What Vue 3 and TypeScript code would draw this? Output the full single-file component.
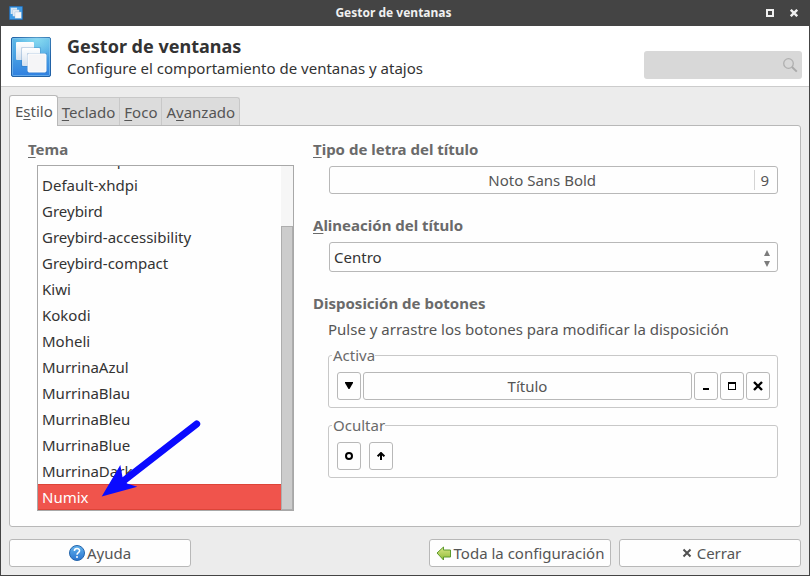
<script setup lang="ts">
import { ref } from 'vue'

interface TabItem {
  id: string
  before: string
  key: string
  after: string
}

const tabs: TabItem[] = [
  { id: 'style', before: 'E', key: 's', after: 'tilo' },
  { id: 'keyboard', before: '', key: 'T', after: 'eclado' },
  { id: 'focus', before: '', key: 'F', after: 'oco' },
  { id: 'advanced', before: 'A', key: 'v', after: 'anzado' },
]

const themes: string[] = [
  'Default-hdpi',
  'Default-xhdpi',
  'Greybird',
  'Greybird-accessibility',
  'Greybird-compact',
  'Kiwi',
  'Kokodi',
  'Moheli',
  'MurrinaAzul',
  'MurrinaBlau',
  'MurrinaBleu',
  'MurrinaBlue',
  'MurrinaDark',
  'Numix',
]

const activeTab = ref('style')
const theme = ref('Numix')
const alignment = ref('Centro')
const query = ref('')
</script>

<template>
  <div class="window">
    <header class="titlebar">
      <svg class="app-icon" viewBox="0 0 40 40" aria-hidden="true">
        <rect x="1" y="1" width="38" height="38" rx="2" fill="#3f9be6" stroke="#1f62a8" stroke-width="2" />
        <rect x="5" y="5" width="18" height="18" fill="#d7e6f4" />
        <rect x="11" y="11" width="18" height="18" fill="#e6edf5" stroke="#8db4d8" />
        <rect x="17" y="17" width="18" height="18" fill="#f6f6f8" stroke="#7fa8cf" />
      </svg>
      <span class="window-title">Gestor de ventanas</span>
      <div class="window-controls">
        <button type="button" aria-label="Maximizar">
          <svg width="8" height="8" viewBox="0 0 8 8"><path d="M1 1h6v6H1z" fill="none" stroke="#f0f0f0" stroke-width="2" /></svg>
        </button>
        <button type="button" aria-label="Cerrar ventana">
          <svg width="8" height="8" viewBox="0 0 8 8"><path d="M.8.8l6.4 6.4M7.2.8L.8 7.2" stroke="#f0f0f0" stroke-width="2.4" /></svg>
        </button>
      </div>
    </header>

    <section class="heading">
      <svg class="heading-icon" viewBox="0 0 40 40" aria-hidden="true">
        <defs>
          <linearGradient id="tile" x1="0" y1="0" x2="0" y2="1">
            <stop offset="0" stop-color="#5cb8e6" />
            <stop offset=".5" stop-color="#479fe3" />
            <stop offset="1" stop-color="#2f7fe0" />
          </linearGradient>
          <radialGradient id="glow" cx=".65" cy="0" r=".6">
            <stop offset="0" stop-color="#8fe0f2" stop-opacity=".9" />
            <stop offset="1" stop-color="#8fe0f2" stop-opacity="0" />
          </radialGradient>
          <linearGradient id="sheet" x1="0" y1="0" x2="0" y2="1">
            <stop offset="0" stop-color="#ffffff" />
            <stop offset="1" stop-color="#d3e0ee" />
          </linearGradient>
        </defs>
        <rect x=".5" y=".5" width="39" height="39" rx="1.5" fill="url(#tile)" stroke="#2262a6" />
        <rect x=".5" y=".5" width="39" height="39" rx="1.5" fill="url(#glow)" />
        <rect x="1.5" y="1.5" width="37" height="37" rx="1" fill="none" stroke="#8ecbf2" stroke-opacity=".55" />
        <rect x="5" y="5" width="18" height="18" rx="1" fill="url(#sheet)" />
        <rect x="10" y="10" width="20" height="20" rx="1" fill="#1d5fa8" opacity=".22" />
        <rect x="11" y="11" width="18" height="18" rx="1" fill="url(#sheet)" />
        <rect x="16" y="16" width="20" height="20" rx="1" fill="#1d5fa8" opacity=".3" />
        <rect x="17" y="17" width="18" height="18" rx="1" fill="#f5f5f7" stroke="#ffffff" />
      </svg>
      <div class="heading-text">
        <h1>Gestor de ventanas</h1>
        <p>Configure el comportamiento de ventanas y atajos</p>
      </div>
      <label class="search">
        <input v-model="query" type="text" aria-label="Buscar" />
        <svg width="16" height="16" viewBox="0 0 16 16" aria-hidden="true">
          <circle cx="6.500" cy="6.500" r="4.800" fill="none" stroke="#b0b0b0" stroke-width="1.300" />
          <path d="M10 10l4.800 4.600" stroke="#aaaaaa" stroke-width="2" />
        </svg>
      </label>
    </section>

    <main class="body">
      <div class="tabs" role="tablist">
        <button
          v-for="tab in tabs"
          :key="tab.id"
          type="button"
          role="tab"
          class="tab"
          :class="{ active: tab.id === activeTab }"
          :aria-selected="tab.id === activeTab"
          @click="activeTab = tab.id"
        >{{ tab.before }}<u>{{ tab.key }}</u>{{ tab.after }}</button>
      </div>

      <div class="panel" role="tabpanel">
        <section class="themes">
          <h2 id="theme-label"><u>T</u>ema</h2>
          <div class="list-frame">
            <ul class="list" role="listbox" aria-labelledby="theme-label">
              <li
                v-for="name in themes"
                :key="name"
                role="option"
                :class="{ selected: name === theme }"
                :aria-selected="name === theme"
                @click="theme = name"
              >{{ name }}</li>
            </ul>
            <div class="scrollbar"><div class="thumb"></div></div>
            <svg class="pointer" width="102" height="86" viewBox="0 0 102 86" aria-hidden="true">
              <path d="M96.700 8L24 64.500" stroke="#0a0aff" stroke-width="7" stroke-linecap="round" />
              <path d="M1.700 80.500L20.300 49L22.500 61L27 67.500L37.300 70.700z" fill="#0a0aff" />
            </svg>
          </div>
        </section>

        <section class="settings">
          <div class="group">
            <h2 id="font-label"><u>T</u>ipo de letra del título</h2>
            <button type="button" class="box field font-button" aria-describedby="font-label">
              <span class="font-name">Noto Sans Bold</span>
              <span class="font-size">9</span>
            </button>
          </div>

          <div class="group">
            <h2><label for="alignment"><u>A</u>lineación del título</label></h2>
            <div class="field combo">
              <select id="alignment" v-model="alignment" class="box">
                <option>Centro</option>
              </select>
              <svg width="6" height="17" viewBox="0 0 6 17" aria-hidden="true">
                <path d="M3 0L6 6H0zM0 11h6L3 17z" fill="#7c7c7c" />
              </svg>
            </div>
          </div>

          <div class="group">
            <h2>Disposición de botones</h2>
            <p class="hint">Pulse y arrastre los botones para modificar la disposición</p>
            <fieldset>
              <legend>Activa</legend>
              <div class="slots tight">
                <button type="button" class="box slot" aria-label="Menú">
                  <svg width="8" height="8" viewBox="0 0 8 8"><path d="M0 0h8v1L4.500 7h-1L0 1z" /></svg>
                </button>
                <button type="button" class="box slot title-slot">Título</button>
                <button type="button" class="box slot" aria-label="Minimizar">
                  <svg width="6" height="8" viewBox="0 0 6 8"><path d="M0 6h6v2H0z" /></svg>
                </button>
                <button type="button" class="box slot" aria-label="Maximizar">
                  <svg width="8" height="8" viewBox="0 0 8 8"><path d="M0 0h8v8H0zM1 2v5h6V2z" fill-rule="evenodd" /></svg>
                </button>
                <button type="button" class="box slot" aria-label="Cerrar">
                  <svg width="10" height="10" viewBox="0 0 10 10"><path d="M1 1l8 8M9 1L1 9" stroke="#000" stroke-width="2.400" /></svg>
                </button>
              </div>
            </fieldset>
            <fieldset>
              <legend>Ocultar</legend>
              <div class="slots">
                <button type="button" class="box slot" aria-label="Pegar">
                  <svg width="8" height="8" viewBox="0 0 8 8"><circle cx="4" cy="4" r="3" fill="none" stroke="#000" stroke-width="2" /></svg>
                </button>
                <button type="button" class="box slot" aria-label="Enrollar">
                  <svg width="8" height="8" viewBox="0 0 8 8"><path d="M4 8V1M.6 4.400L4 1l3.400 3.400" fill="none" stroke="#000" stroke-width="2" /></svg>
                </button>
              </div>
            </fieldset>
          </div>
        </section>
      </div>

      <footer class="actions">
        <button type="button" class="box action">
          <svg width="16" height="16" viewBox="0 0 16 16" aria-hidden="true">
            <defs>
              <linearGradient id="help" x1="0" y1="0" x2="0" y2="1">
                <stop offset="0" stop-color="#62b4ee" />
                <stop offset="1" stop-color="#2b74cf" />
              </linearGradient>
            </defs>
            <circle cx="8" cy="8" r="7.500" fill="url(#help)" stroke="#2565ab" />
            <path d="M5.400 6C5.400 2.800 10.600 2.800 10.600 5.800C10.600 7.800 8 7.600 8 9.800" fill="none" stroke="#fff" stroke-width="1.500" />
            <circle cx="8" cy="12" r="1" fill="#fff" />
          </svg>
          <span>Ayuda</span>
        </button>
        <span class="spacer"></span>
        <button type="button" class="box action">
          <svg width="16" height="16" viewBox="0 0 16 16" aria-hidden="true">
            <defs>
              <linearGradient id="back" x1="0" y1="0" x2="0" y2="1">
                <stop offset="0" stop-color="#dbe88a" />
                <stop offset="1" stop-color="#8fba35" />
              </linearGradient>
            </defs>
            <path d="M1 8l6.500-6v3H14.500v7H7.500v3z" fill="url(#back)" stroke="#5c9a2c" stroke-linejoin="round" />
          </svg>
          <span>Toda la configuración</span>
        </button>
        <button type="button" class="box action">
          <svg width="16" height="16" viewBox="0 0 16 16" aria-hidden="true">
            <path d="M4.500 4.500l7 7M11.500 4.500l-7 7" stroke="#505050" stroke-width="2" />
          </svg>
          <span>Cerrar</span>
        </button>
      </footer>
    </main>
  </div>
</template>

<style>
body {
  margin: 0;
  background: #444444;
}
</style>

<style scoped>
.window {
  box-sizing: border-box;
  min-height: 100vh;
  display: flex;
  flex-direction: column;
  border: 1px solid #444444;
  border-top: 0;
  background: #ececec;
  color: #555555;
  font: 15px/20px "Noto Sans", sans-serif;
}

button,
input,
select {
  font: inherit;
  color: inherit;
  margin: 0;
  padding: 0;
  border: 0;
  background: none;
}

svg {
  display: block;
  flex: none;
}

u {
  text-decoration-thickness: 1px;
  text-underline-offset: 2px;
  text-decoration-skip-ink: none;
}

.titlebar {
  display: grid;
  grid-template-columns: 1fr auto 1fr;
  align-items: center;
  height: 26px;
  padding: 0 11px 0 8px;
  background: #444444;
  color: #f0f0f0;
}

.app-icon {
  width: 14px;
  height: 14px;
}

.window-title {
  margin-right: 20px;
  font-size: 12px;
  font-weight: 700;
}

.window-controls {
  display: flex;
  justify-content: flex-end;
  gap: 16px;
}

.heading {
  display: flex;
  align-items: center;
  height: 60px;
  padding: 0 7px 0 10px;
  border-bottom: 1px solid #cccccc;
  background: #ffffff;
  color: #333333;
}

.heading-icon {
  width: 40px;
  height: 40px;
  margin-top: 2px;
}

.heading-text {
  flex: 1;
  margin-left: 16px;
}

h1,
h2,
p {
  margin: 0;
}

h1 {
  font-size: 18px;
  line-height: 24px;
}

.search {
  box-sizing: border-box;
  display: flex;
  align-items: center;
  align-self: flex-end;
  width: 158px;
  height: 28px;
  margin-bottom: 7px;
  padding: 0 4px 0 6px;
  border-radius: 3px;
  background: #d8d8d8;
}

.search input {
  flex: 1;
  min-width: 0;
  outline: 0;
}

.body {
  flex: 1;
  display: flex;
  flex-direction: column;
  padding: 8px;
}

.tabs {
  display: flex;
  align-items: flex-end;
  height: 30px;
}

.tab {
  height: 28px;
  padding: 0 4px;
  border: 1px solid #c8c8c8;
  border-width: 1px 1px 0 0;
  background: #dcdcdc;
}

.tab:last-child {
  border-radius: 0 3px 0 0;
}

.tab.active {
  position: relative;
  height: 31px;
  margin-bottom: -1px;
  padding: 0 4px 0 5px;
  border: 1px solid #b8b8b8;
  border-bottom: 0;
  border-radius: 3px 3px 0 0;
  background: #fefefe;
}

.panel {
  flex: 1;
  display: flex;
  gap: 19px;
  padding: 13px 22px 15px 18px;
  border: 1px solid #b8b8b8;
  border-radius: 0 3px 3px 3px;
  background: #fefefe;
}

h2 {
  color: #6a6a6a;
  font-size: 15px;
  line-height: 20px;
}

.themes {
  display: flex;
  flex-direction: column;
  gap: 6px;
  width: 266px;
}

.list-frame {
  position: relative;
  flex: 1 1 344px;
  display: flex;
  margin-left: 9px;
  border: 1px solid #a8a8a8;
}

.list {
  flex: 1;
  display: flex;
  flex-direction: column;
  justify-content: flex-end;
  height: 344px;
  margin: 0;
  padding: 0;
  overflow: hidden;
  list-style: none;
  color: #333333;
}

.list li {
  box-sizing: border-box;
  flex: none;
  height: 26px;
  padding: 3px 4px;
}

.list .selected {
  padding: 2px 4px;
  border: solid #dd4438;
  border-width: 1px 0;
  background: #f0544c;
  color: #ffffff;
}

.scrollbar {
  display: flex;
  align-items: flex-end;
  width: 12px;
  background: #f6f6f6;
}

.thumb {
  box-sizing: border-box;
  width: 100%;
  height: 82.6%;
  border: 1px solid #adadad;
  background: #cccccc;
}

.pointer {
  position: absolute;
  left: 62px;
  bottom: 8px;
  pointer-events: none;
}

.settings {
  flex: 1;
  display: flex;
  flex-direction: column;
  gap: 21px;
}

.group {
  display: flex;
  flex-direction: column;
  gap: 6px;
}

.box {
  box-sizing: border-box;
  border: 1px solid #b8b8b8;
  border-radius: 3px;
  background: #fefefe;
}

.field {
  margin: 1px 0 0 16px;
}

.font-button {
  display: flex;
  align-items: center;
  height: 28px;
}

.font-name {
  flex: 1;
}

.font-size {
  padding: 0 8px 0 5px;
  border-left: 1px solid #d4d4d4;
}

.combo {
  display: grid;
  align-items: center;
}

.combo > * {
  grid-area: 1 / 1;
}

.combo select {
  width: 100%;
  height: 30px;
  padding: 0 20px 0 4px;
  appearance: none;
  color: #333333;
}

.combo svg {
  justify-self: end;
  margin: 3px 8px 0 0;
  pointer-events: none;
}

.hint {
  margin-left: 15px;
}

fieldset {
  min-width: 0;
  margin: 0 0 1px 15px;
  padding: 7px 3px;
  border: 1px solid #c8c8c8;
  border-radius: 3px;
}

legend {
  padding: 0 0 0 1px;
  color: #6a6a6a;
}

.slots {
  display: flex;
  gap: 8px;
  padding: 0 4px 0 5px;
}

.slots.tight {
  gap: 2px;
}

.slot {
  display: flex;
  align-items: center;
  justify-content: center;
  width: 24px;
  height: 28px;
}

.title-slot {
  flex: 1;
}

.actions {
  display: flex;
  gap: 8px;
  margin-top: 12px;
}

.spacer {
  flex: 1;
}

.action {
  display: flex;
  align-items: center;
  justify-content: center;
  gap: 2px;
  width: 182px;
  height: 28px;
}
</style>
